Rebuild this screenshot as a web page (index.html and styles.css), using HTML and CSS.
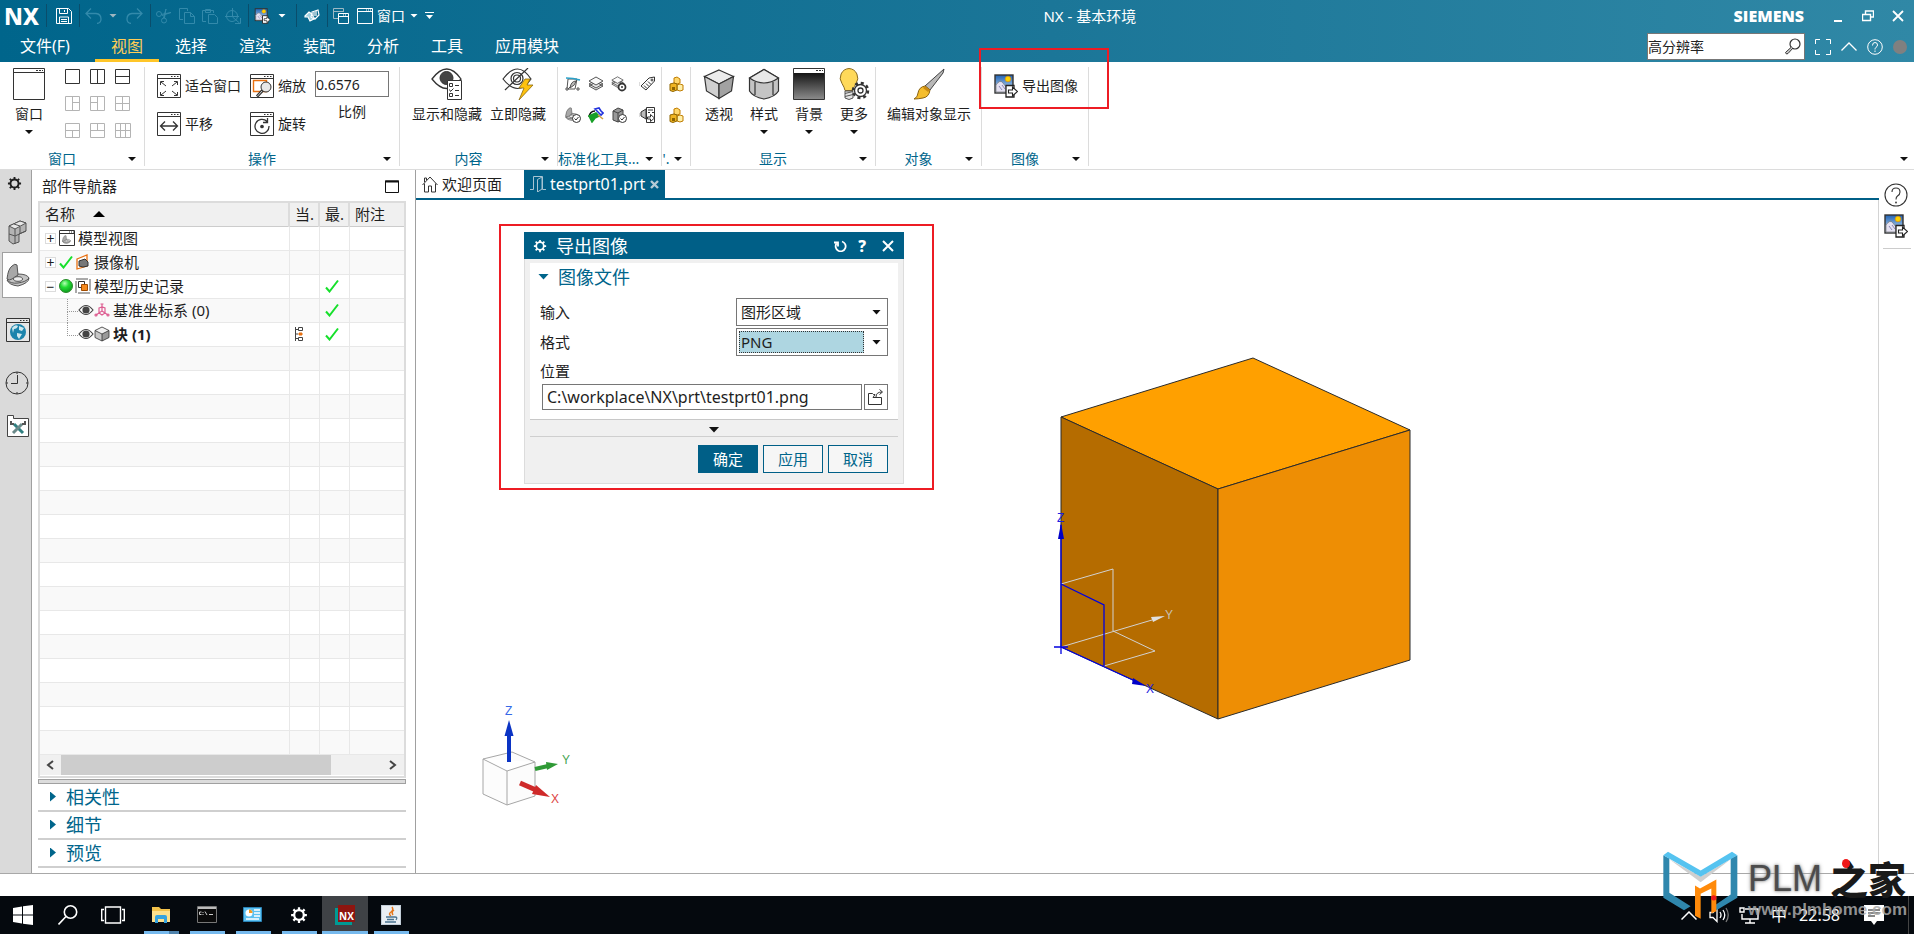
FILE: index.html
```
<!DOCTYPE html>
<html lang="zh-CN">
<head>
    <meta charset="UTF-8">
    <meta name="viewport" content="width=device-width, initial-scale=1.0">
    <title>NX - 基本环境</title>
    <link rel="stylesheet" href="styles.css">
</head>
<body>
    <!-- shared icons -->
    <svg class="defs" width="0" height="0">
        <defs>
            <linearGradient id="sky" x1="0" y1="0" x2="0" y2="1"><stop offset="0" stop-color="#1f62b4"/><stop offset="1" stop-color="#d8ecfa"/></linearGradient>
            <linearGradient id="dark" x1="0" y1="0" x2="0" y2="1"><stop offset="0" stop-color="#151515"/><stop offset="1" stop-color="#8a8a8a"/></linearGradient>
            <radialGradient id="ball" cx="0.4" cy="0.3" r="0.8"><stop offset="0" stop-color="#b6ffb6"/><stop offset="0.4" stop-color="#22dd33"/><stop offset="1" stop-color="#0a8a1a"/></radialGradient>
            <symbol id="i-export" viewBox="0 0 24 24">
                <rect x="1" y="1" width="18" height="18" fill="url(#sky)" stroke="#333" stroke-width="1.4"/>
                <circle cx="14" cy="5" r="2.8" fill="#ffd400" stroke="#e08a00" stroke-width="0.6"/>
                <path d="M2 11 Q6 5 9 9 L12 13 L12 18 L2 18 Z" fill="#e4e1f2" stroke="#777" stroke-width="0.7"/>
                <path d="M5 12l3 4M8 11l3 4" stroke="#8a86b4"/>
                <path d="M12 11.500h8v11.500h-8z" fill="#fff" stroke="#222" stroke-width="1.3"/>
                <path d="M14.500 16h4v-3l5 4.500l-5 4.500v-3h-4z" fill="#fff" stroke="#222" stroke-width="1.1"/>
            </symbol>
            <symbol id="i-check" viewBox="0 0 14 14"><path d="M1 8.500L4.500 12.500L13 1.500" fill="none" stroke="#16e02b" stroke-width="2"/></symbol>
            <symbol id="i-eye" viewBox="0 0 16 12"><path d="M1 6Q8 -3 15 6Q8 15 1 6Z" fill="#fff" stroke="#444" stroke-width="1.2"/><circle cx="8" cy="6" r="3.600" fill="#444"/></symbol>
            <symbol id="i-cube" viewBox="0 0 16 16"><path d="M8 1L15 4.500V11.500L8 15L1 11.500V4.500Z" fill="#c8c8c8"/><path d="M8 1L15 4.500L8 8L1 4.500Z" fill="#f0f0f0"/><path d="M8 8L15 4.500V11.500L8 15Z" fill="#9a9a9a"/><path d="M8 1L15 4.500V11.500L8 15L1 11.500V4.500ZM1 4.500L8 8L15 4.500M8 8V15" fill="none" stroke="#333" stroke-width="0.8"/></symbol>
            <symbol id="i-gear" viewBox="0 0 16 16"><circle cx="8" cy="8" r="4.300" fill="none" stroke="currentColor" stroke-width="2"/><path d="M8 1v3M8 12v3M1 8h3M12 8h3M3 3l2 2M11 11l2 2M3 13l2-2M11 5l2-2" stroke="currentColor" stroke-width="2"/></symbol>
            <symbol id="i-help" viewBox="0 0 24 24"><circle cx="12" cy="12" r="11" fill="none" stroke="currentColor" stroke-width="1.1"/><path d="M8 9q0-4 4-4t4 4q0 2.500-2.500 4q-1.500 1-1.500 3.500" fill="none" stroke="currentColor" stroke-width="1.1"/><circle cx="12" cy="19.500" r="0.900" fill="currentColor"/></symbol>
            <symbol id="i-frame" viewBox="0 0 24 24"><path d="M0.500 0.500h23v23h-23zM0.500 4.500h23" fill="none" stroke="#333"/><path d="M14 2.500h1.500M17 2.500h1.500M20 2.500h1.500" stroke="#333"/></symbol>
            <symbol id="i-boxes" viewBox="0 0 16 16"><path d="M6 2l3-1l3 2v4l-3 1l-3-1z" fill="#ffd76a" stroke="#c07c00"/><path d="M9 9l3-1l3 1v5l-3 1l-3-1z" fill="#fff0a8" stroke="#c07c00"/><path d="M2 8l4-1l3 1v6l-4 1.500l-3-1z" fill="#f0b420" stroke="#8f6500"/><path d="M4 11h3v3h-3z" fill="#8f6500"/></symbol>
            <symbol id="i-layers" viewBox="0 0 16 16"><path d="M8 6L15 10L8 14L1 10ZM8 4L15 8L8 12L1 8Z" fill="#e6e6e6" stroke="#444" stroke-width="0.900"/><path d="M8 1L15 5L8 9L1 5Z" fill="#fafafa" stroke="#444" stroke-width="0.900"/></symbol>
            <symbol id="i-badge" viewBox="0 0 16 16"><circle cx="11.500" cy="11.500" r="4" fill="#fff" stroke="#333"/><path d="M9.500 11.500l1.500 1.500l2.500-3" fill="none" stroke="#333"/></symbol>
            <symbol id="i-part" viewBox="0 0 24 24"><path d="M1 17Q6 11 12 11Q21 11 23 15Q23 20 12 23Q3 22 1 17Z" fill="#c4c4c4" stroke="#555"/><path d="M1 16Q2 6 6 3Q9 0 11 2L12 12L6 16Q3 18 1 16Z" fill="#a8a8a8" stroke="#555"/><path d="M1 17Q5 21 12 20Q20 19 23 15" fill="none" stroke="#555"/><ellipse cx="12" cy="16" rx="4.500" ry="2.300" fill="#eee" stroke="#555"/></symbol>
        </defs>
    </svg>

    <header class="app-header">
        <div class="titlebar">
            <span class="brand">NX</span>
            <span class="sep"></span>
            <button class="qa" aria-label="保存"><svg width="16" height="16" fill="none" stroke="#fff"><path d="M0.500 0.500h12l3 3v12h-15zM3.500 0.500v5h8v-5M8.500 2v2M3.500 15v-6h9v6M5 11.500h6M5 13.500h6"/></svg></button>
            <span class="sep"></span>
            <button class="qa faded" aria-label="撤消"><svg width="17" height="16" fill="none" stroke="#3f93b3" stroke-width="1.300"><path d="M6 0.500L1 5.500L6 10.500M1 5.500H11Q16 6 16 11Q16 15 12 15.500"/></svg></button>
            <i class="caret light dim"></i>
            <button class="qa faded" aria-label="重做"><svg width="17" height="16" fill="none" stroke="#3f93b3" stroke-width="1.300"><path d="M11 0.500L16 5.500L11 10.500M16 5.500H6Q1 6 1 11Q1 15 5 15.500"/></svg></button>
            <span class="sep"></span>
            <button class="qa faded" aria-label="剪切"><svg width="16" height="16" fill="none" stroke="#3f93b3"><circle cx="3" cy="6" r="2.500"/><circle cx="8" cy="12.500" r="2.500"/><path d="M5 6.500L15 4.500L6 7.500M7.500 10L10 1L9 6L8.500 10"/></svg></button>
            <button class="qa faded" aria-label="复制"><svg width="16" height="16" fill="none" stroke="#3f93b3"><path d="M4 11.500H0.500V0.500H8.500V3M5.500 4.500H11.500L15.500 8.500V15.500H5.500ZM11.500 4.500V8.500H15.500"/></svg></button>
            <button class="qa faded" aria-label="粘贴"><svg width="16" height="16" fill="none" stroke="#3f93b3"><path d="M4 13.500H0.500V2.500H11.500V5M3.500 1.500H8.500V4.500H3.500ZM6.500 6.500H12.500L15.500 9.500V15.500H6.500Z"/></svg></button>
            <button class="qa faded" aria-label="移动"><svg width="16" height="16" fill="none" stroke="#3f93b3"><circle cx="7" cy="8" r="5.500"/><path d="M0 8.500H14M7.500 0V9L14.500 15M10 15.500H15.500V10"/></svg></button>
            <span class="sep"></span>
            <button class="qa" aria-label="导出图像"><svg width="17" height="16"><use href="#i-export"/></svg></button>
            <i class="caret light"></i>
            <span class="sep wide"></span>
            <button class="qa" aria-label="触控"><svg width="16" height="14" fill="none" stroke="#fff" stroke-width="1.200"><path d="M1 7L5 3L8 5L7 8L10 10L6 12L4 8L1 8Z" fill="#9fd0e0"/><path d="M8 3L14 1L15 6L11 10L8 6Z"/><path d="M10 3v4M12 2v5"/></svg></button>
            <span class="sep"></span>
            <button class="qa" aria-label="切换窗口"><svg width="17" height="16" fill="none" stroke="#fff"><path d="M5 10.500H0.500V0.500H10.500V4M0.500 3.500H10" stroke="#9cb9c4"/><path d="M5.500 5.500H15.500V15.500H5.500ZM5.500 8.500H15.500M10 7h1M12 7h1"/></svg></button>
            <button class="qa window-menu"><svg width="16" height="16" fill="none" stroke="#fff"><path d="M0.500 0.500h15v15h-15zM0.500 3.500h15M9 2h1M11 2h1M13 2h1"/></svg>窗口</button>
            <i class="caret light"></i>
            <button class="more" aria-label="自定义"><svg width="9" height="7"><path d="M0 0.500h9" stroke="#fff"/><path d="M1 3h7l-3.500 4z" fill="#fff"/></svg></button>
            <h1 class="app-title">NX - 基本环境</h1>
            <span class="siemens">SIEMENS</span>
            <button class="win-btn" aria-label="最小化"><svg width="12" height="12"><path d="M2 11h8" stroke="#fff" stroke-width="2"/></svg></button>
            <button class="win-btn" aria-label="还原"><svg width="12" height="12" fill="none" stroke="#fff"><path d="M0.500 4.500h8v6h-8zM3.500 4V1h8v6h-3" stroke-width="1.400"/></svg></button>
            <button class="win-btn" aria-label="关闭"><svg width="12" height="12"><path d="M1 1l10 10M11 1L1 11" stroke="#fff" stroke-width="1.800"/></svg></button>
        </div>
        <nav class="menubar">
            <a href="#" class="menu file">文件(F)</a>
            <a href="#" class="menu active">视图</a>
            <a href="#" class="menu">选择</a>
            <a href="#" class="menu">渲染</a>
            <a href="#" class="menu">装配</a>
            <a href="#" class="menu">分析</a>
            <a href="#" class="menu">工具</a>
            <a href="#" class="menu">应用模块</a>
            <div class="search">
                <input type="text" value="高分辨率" aria-label="命令查找器">
                <svg width="17" height="17" fill="none" stroke="#333"><circle cx="11" cy="6" r="5" stroke-width="1.200"/><path d="M7.500 9L1.500 14.500L2.500 16L4 15.500L9 10" fill="#ccc"/></svg>
            </div>
            <div class="menu-tools">
                <button aria-label="全屏"><svg width="16" height="16" fill="none" stroke="#fff"><path d="M0.500 5V0.500H5M11 0.500H15.500V5M15.500 11V15.500H11M5 15.500H0.500V11"/></svg></button>
                <button aria-label="收起"><svg width="16" height="9" fill="none" stroke="#fff" stroke-width="1.300"><path d="M0.500 8.500L8 1L15.500 8.500"/></svg></button>
                <button aria-label="帮助"><svg width="16" height="16" fill="none" stroke="#fff"><circle cx="8" cy="8" r="7.300"/><path d="M5.500 6.500q0-3 2.500-3t2.500 2.500q0 1.500-1.500 2.300q-1 0.700-1 2.200M8 11.500v1.500"/></svg></button>
                <span class="dot"></span>
            </div>
        </nav>
    </header>

    <section class="ribbon">
        <div class="group g-window">
            <div class="group-body">
                <button class="big">
                    <svg width="32" height="32" fill="none" stroke="#333"><path d="M0.500 0.500h31v31h-31zM0.500 4.500h31M23 2.500h2M26 2.500h2M29 2.500h1"/></svg>
                    <span>窗口</span><i class="caret"></i>
                </button>
                <div class="layouts">
                    <svg width="15" height="15"><path d="M0.500 0.500h14v14h-14z"/></svg>
                    <svg width="15" height="15"><path d="M0.500 0.500h14v14h-14zM7.500 1v13"/></svg>
                    <svg width="15" height="15"><path d="M0.500 0.500h14v14h-14zM1 7.500h13"/></svg>
                    <svg class="off" width="15" height="15"><path d="M0.500 0.500h14v14h-14zM7.500 1v13M8 6.500h6"/></svg>
                    <svg class="off" width="15" height="15"><path d="M0.500 0.500h14v14h-14zM7.500 1v13M1 6.500h6"/></svg>
                    <svg class="off" width="15" height="15"><path d="M0.500 0.500h14v14h-14zM7.500 1v13M1 7.500h13"/></svg>
                    <svg class="off" width="15" height="15"><path d="M0.500 0.500h14v14h-14zM1 7.500h13M7.500 8v6"/></svg>
                    <svg class="off" width="15" height="15"><path d="M0.500 0.500h14v14h-14zM1 7.500h13M7.500 1v6"/></svg>
                    <svg class="off" width="16" height="15"><path d="M0.500 0.500h15v14h-15zM1 7.500h14M5.500 1v13M10.500 1v13"/></svg>
                </div>
            </div>
            <div class="group-foot"><span>窗口</span><i class="caret"></i></div>
        </div>
        <div class="group g-ops">
            <div class="group-body">
                <div class="op-grid">
                    <button class="small"><svg width="24" height="24" fill="none" stroke="#333"><use href="#i-frame"/><path d="M3.500 11V7.500H7M4 8l5 4M20.500 11V7.500H17M20 8l-5 4M3.500 18V21.500H7M4 21l5-4M20.500 18V21.500H17M20 21l-5-4"/></svg>适合窗口</button>
                    <button class="small"><svg width="24" height="24" fill="none" stroke="#333"><use href="#i-frame"/><path d="M3.500 6.500h13v11h-13z" stroke="#e87010" stroke-width="1.400"/><circle cx="16" cy="13" r="5" fill="#e8e8e8"/><path d="M12.500 16.500L7 22.500" stroke-width="3"/><path d="M12 17L7.500 22" stroke="#ccc"/></svg>缩放</button>
                    <button class="small"><svg width="24" height="24" fill="none" stroke="#333" stroke-width="1.300"><use href="#i-frame" stroke-width="1"/><path d="M3.500 14h17M8 9.500L3.500 14L8 18.500M16 9.500L20.500 14L16 18.500"/></svg>平移</button>
                    <button class="small"><svg width="24" height="24" fill="none" stroke="#333" stroke-width="1.300"><use href="#i-frame" stroke-width="1"/><path d="M17 9.500A7 7 0 1 0 19 14M17.500 6V10.500H13"/><circle cx="12" cy="14.500" r="1.200" fill="#333"/></svg>旋转</button>
                </div>
                <div class="scale">
                    <input id="scale" type="text" value="0.6576">
                    <label for="scale">比例</label>
                </div>
            </div>
            <div class="group-foot"><span>操作</span><i class="caret"></i></div>
        </div>
        <div class="group g-content">
            <div class="group-body">
                <button class="big">
                    <svg width="32" height="32" fill="none" stroke="#333"><path d="M1 11Q16 -9 30 11Q16 30 1 11Z" fill="#fff" stroke-width="1.300"/><circle cx="15.500" cy="10" r="6.500" fill="#444"/><path d="M16.500 12.500h14v19h-14z" fill="#fff"/><path d="M18.500 15.500h3v3h-3zM18.500 25.500h3v3h-3zM18.500 21.500l1 2l3-3M24 17.500h4M24 22.500h4M24 27.500h4"/></svg>
                    <span>显示和隐藏</span>
                </button>
                <button class="big">
                    <svg width="32" height="32" fill="none" stroke="#333" stroke-width="1.200"><path d="M1 11Q16 -9 29 11Q16 30 1 11Z"/><circle cx="15" cy="10.500" r="6"/><circle cx="15" cy="10.500" r="3.500"/><path d="M3 22L26 0"/><path d="M23 11h5l-3 6h6l-14 15l5-12h-5z" fill="#ffc20e" stroke="#8a6a10" stroke-width="0.800"/></svg>
                    <span>立即隐藏</span>
                </button>
            </div>
            <div class="group-foot"><span>内容</span><i class="caret"></i></div>
        </div>
        <div class="group g-std">
            <div class="group-body">
                <div class="tools">
                    <svg width="16" height="16" fill="none" stroke="#555"><path d="M3 3h9l-2 10h-8zM2 14L12 4"/><path d="M1 2Q8 2 15 4" stroke="#2aa0c8" stroke-width="1.500"/><path d="M1 12h2v2h-2zM12 12h2v2h-2z" fill="#fff"/><path d="M5 12q1-7 6-7q0 4-6 7" fill="#bbb"/></svg>
                    <svg width="16" height="16"><use href="#i-layers"/></svg>
                    <svg width="16" height="16"><svg width="13" height="13"><use href="#i-layers"/></svg><circle cx="11" cy="11" r="3.500" fill="#fff" stroke="#333" stroke-width="1.800"/><circle cx="11" cy="11" r="1" fill="#333"/></svg>
                    <svg width="16" height="16"><svg width="14" height="14"><use href="#i-part"/></svg><use href="#i-badge"/></svg>
                    <svg width="16" height="16" fill="none" stroke-width="1.600"><path d="M7 2l4-1l2 3l2 2l-2 2l-3-3z" fill="#fff" stroke="#2233dd"/><path d="M1 10q1-6 6-6" stroke="#111"/><path d="M1 9l3 6l3-4l4-2l-3-3z" stroke="#18a028" fill="#18a028"/><path d="M10 8l5 4" stroke="#d0a040"/></svg>
                    <svg width="16" height="16"><path d="M2 4l5-3l5 2v10l-5 2l-5-2z" fill="#999" stroke="#444"/><path d="M2 4l5 2l5-3M7 6v9" stroke="#444" fill="none"/><use href="#i-badge"/></svg>
                </div>
                <div class="tools split">
                    <svg width="16" height="16" fill="none" stroke="#333"><path d="M1 10L9 2L14.500 1L14.500 5L6 14Z"/><circle cx="12" cy="4" r="1"/><path d="M4 9.500l3 3M6 7.500l3 3M8 5.500l3 3"/></svg>
                    <svg width="16" height="16" fill="none" stroke="#333"><path d="M1 5l5-3v10l-5-3z" fill="#bbb"/><path d="M6.500 0.500h8v15h-8z" fill="#fff"/><path d="M8 3h5M8 5.500h2M12 5.500h2M7.500 10h3v-2.500l4 3.500l-4 3.500v-2.500h-3z"/></svg>
                </div>
            </div>
            <div class="group-foot"><span>标准化工具...</span><i class="caret"></i></div>
        </div>
        <div class="group g-mini">
            <div class="group-body">
                <div class="tools one">
                    <svg width="16" height="16"><use href="#i-boxes"/></svg>
                    <svg width="16" height="16"><use href="#i-boxes"/></svg>
                </div>
            </div>
            <div class="group-foot"><span>'.</span><i class="caret"></i></div>
        </div>
        <div class="group g-display">
            <div class="group-body">
                <button class="big"><svg width="32" height="32" viewBox="0 0 32 32" stroke="#333" stroke-width="1.200"><path d="M16 2L30.500 8.500L16 16L1.500 8.500Z" fill="#ececec"/><path d="M1.500 8.500L16 16V30.500L3.500 23Z" fill="#d0d0d0"/><path d="M30.500 8.500L16 16V30.500L28.500 23Z" fill="#a2a2a2"/></svg><span>透视</span></button>
                <button class="big"><svg width="32" height="32" viewBox="0 0 32 32" stroke="#333" stroke-width="1.200"><path d="M1.500 10L16 1.500L30.500 10V23Q27 29 16 31Q5 29 1.500 23Z" fill="#c4c4c4"/><path d="M1.500 10L16 1.500L30.500 10Q16 20 1.500 10Z" fill="#e8e8e8"/><path d="M7 14v13M25 14v13" fill="none"/></svg><span>样式</span><i class="caret"></i></button>
                <button class="big"><svg width="32" height="32"><path d="M0.500 0.500h31v31h-31z" fill="#fff" stroke="#333"/><path d="M1 5h30v26h-30z" fill="url(#dark)"/><path d="M23 2.500h2M26 2.500h2M29 2.500h1" stroke="#333"/></svg><span>背景</span><i class="caret"></i></button>
                <button class="big"><svg width="32" height="32"><path d="M11 0.500a9.500 9.500 0 0 1 7 15q-2.500 4-3 7h-8q-0.500-3-3-7a9.500 9.500 0 0 1 7-15z" fill="#ffd95a" stroke="#8a6a20"/><path d="M7 23h8v7q-4 3-8 0zM7 25.500l8-2M7 28.500l8-2" fill="#e4e4e4" stroke="#555"/><circle cx="22.500" cy="22.500" r="7" fill="#fff"/><circle cx="22.500" cy="22.500" r="7.500" fill="none" stroke="#333" stroke-width="2.500" stroke-dasharray="3 2.900"/><circle cx="22.500" cy="22.500" r="6" fill="#fff" stroke="#333" stroke-width="1.300"/><circle cx="22.500" cy="22.500" r="2.500" fill="#fff" stroke="#333" stroke-width="1.300"/></svg><span>更多</span><i class="caret"></i></button>
            </div>
            <div class="group-foot"><span>显示</span><i class="caret"></i></div>
        </div>
        <div class="group g-object">
            <div class="group-body">
                <button class="big"><svg width="32" height="32"><path d="M31 1L30 5L17 22L12 18Z" fill="#b8b8b8" stroke="#444"/><path d="M12 18l5 4q-1 7-7 8q-5 1-9 1q4-2 4-6q1-6 7-7z" fill="#f5bd2c" stroke="#8a6210"/><path d="M12 18l5 4l-2 2l-5-4z" fill="#c98a12"/></svg><span>编辑对象显示</span></button>
            </div>
            <div class="group-foot"><span>对象</span><i class="caret"></i></div>
        </div>
        <div class="group g-image">
            <div class="group-body">
                <button class="small"><svg width="24" height="24"><use href="#i-export"/></svg>导出图像</button>
                <div class="callout callout-ribbon"></div>
            </div>
            <div class="group-foot"><span>图像</span><i class="caret"></i></div>
        </div>
        <button class="ribbon-more" aria-label="功能区选项"><i class="caret"></i></button>
    </section>

    <main class="workspace">
        <nav class="resource-bar">
            <button aria-label="设置"><svg width="15" height="15"><use href="#i-gear"/></svg></button>
            <button aria-label="装配导航器"><svg width="20" height="25" stroke="#555"><path d="M1 6L12 1L18 3V11L11 14V22L5 24L1 21Z" fill="#b4b4b4"/><path d="M1 6L12 1L18 3L7 9Z" fill="#e6e6e6"/><path d="M7 9V24M1 14L7 16L18 11M12 7V14M6 4L12 6" fill="none"/></svg></button>
            <button class="current" aria-label="部件导航器"><svg width="24" height="24"><use href="#i-part"/></svg></button>
            <button aria-label="网页浏览器"><svg width="24" height="24"><path d="M0 0h24v24H0z" fill="#e6e6e6"/><use href="#i-frame"/><circle cx="12" cy="14" r="8" fill="#1c84ac"/><path d="M6 10q3-4 6-2q-1 3-4 3l-1 4zM13 8l5 2l-2 3l-3-1zM11 15l5 1l-3 5l-2-3z" fill="#cfe8ee"/></svg></button>
            <button aria-label="历史记录"><svg width="24" height="24" fill="none" stroke="#333"><circle cx="12" cy="12" r="11"/><path d="M12.500 4V12.500H6M12 1v2M12 21v2M1 12h2M21 12h2"/></svg></button>
            <button aria-label="Process Studio"><svg width="22" height="22" fill="none"><path d="M0.500 21.500V0.500h6v3h15v18z" fill="#fff" stroke="#444"/><path d="M7 9L16 18" stroke="#2f7f80" stroke-width="3"/><path d="M15 9L6 18" stroke="#6b8a8a" stroke-width="3"/><path d="M4 6v3h3M18 6v3h-3" stroke="#555" stroke-width="2"/></svg></button>
        </nav>

        <aside class="navigator">
            <div class="nav-title"><h2>部件导航器</h2><button aria-label="最大化"><svg width="14" height="13"><path d="M0.500 1h13v11.500h-13z" fill="none" stroke="#111"/><path d="M0 1.500h14" stroke="#111" stroke-width="2"/></svg></button></div>
            <div class="tree-box">
                <table class="tree">
                    <colgroup><col><col class="c-mini"><col class="c-mini"><col class="c-note"></colgroup>
                    <thead>
                        <tr><th>名称 <svg class="sort" width="12" height="6"><path d="M0 6L6 0L12 6Z"/></svg></th><th>当.</th><th>最.</th><th>附注</th></tr>
                    </thead>
                    <tbody>
                        <tr><td><div class="node"><button class="twist">+</button><svg width="16" height="16"><path d="M0.500 0.500h15v15h-15zM0.500 3.500h15" fill="#fff" stroke="#333"/><path d="M10 2h1M12 2h1M14 2h1" stroke="#333"/><svg x="3" y="5" width="9" height="9"><use href="#i-part"/></svg></svg>模型视图</div></td><td></td><td></td><td></td></tr>
                        <tr><td><div class="node"><button class="twist">+</button><svg width="14" height="14"><use href="#i-check"/></svg><svg width="16" height="16"><path d="M2 5L12 1V12L2 15Z" fill="#fff" stroke="#e87010" stroke-width="1.300"/><path d="M4 7l6-2l3 3v4l-5 1l-4-1z" fill="#777" stroke="#333"/></svg>摄像机</div></td><td></td><td></td><td></td></tr>
                        <tr><td><div class="node"><button class="twist">−</button><svg width="14" height="14"><circle cx="7" cy="7" r="6.500" fill="url(#ball)" stroke="#2a8a2a"/></svg><svg width="16" height="16"><path d="M1 1h14v14H1z" fill="#fff" stroke="#555" stroke-dasharray="12 2"/><path d="M3.500 3.500h6v6h-6z" fill="#fff" stroke="#333"/><path d="M6.500 6.500h6v6h-6z" fill="#f58a1f" stroke="#a34c00"/></svg>模型历史记录</div></td><td></td><td><svg width="14" height="14"><use href="#i-check"/></svg></td><td></td></tr>
                        <tr><td><div class="node child"><svg width="16" height="12"><use href="#i-eye"/></svg><svg width="16" height="16" fill="none" stroke="#dd5c90" stroke-width="1.200"><path d="M8 2V9L2 13M8 9L14 13M6.500 2h3M5 6l3-1l3 1v5l-3 2l-3-2z"/><circle cx="2" cy="13" r="1"/><circle cx="14" cy="13" r="1"/></svg>基准坐标系 (0)</div></td><td></td><td><svg width="14" height="14"><use href="#i-check"/></svg></td><td></td></tr>
                        <tr><td><div class="node child last"><svg width="16" height="12"><use href="#i-eye"/></svg><svg width="16" height="16"><use href="#i-cube"/></svg><b>块 (1)</b></div></td><td><svg width="9" height="14" fill="none" stroke="#444"><path d="M0.500 0v14M1 2.500h2M1 7h2M1 11.500h2M3.500 0.500h4v3h-4zM3.500 10.500h4v3h-4z"/><path d="M4 6h3v2h-3z" fill="#e87010" stroke="#e87010"/></svg></td><td><svg width="14" height="14"><use href="#i-check"/></svg></td><td></td></tr>
                        <tr><td></td><td></td><td></td><td></td></tr>
                        <tr><td></td><td></td><td></td><td></td></tr>
                        <tr><td></td><td></td><td></td><td></td></tr>
                        <tr><td></td><td></td><td></td><td></td></tr>
                        <tr><td></td><td></td><td></td><td></td></tr>
                        <tr><td></td><td></td><td></td><td></td></tr>
                        <tr><td></td><td></td><td></td><td></td></tr>
                        <tr><td></td><td></td><td></td><td></td></tr>
                        <tr><td></td><td></td><td></td><td></td></tr>
                        <tr><td></td><td></td><td></td><td></td></tr>
                        <tr><td></td><td></td><td></td><td></td></tr>
                        <tr><td></td><td></td><td></td><td></td></tr>
                        <tr><td></td><td></td><td></td><td></td></tr>
                        <tr><td></td><td></td><td></td><td></td></tr>
                        <tr><td></td><td></td><td></td><td></td></tr>
                        <tr><td></td><td></td><td></td><td></td></tr>
                        <tr><td></td><td></td><td></td><td></td></tr>
                    </tbody>
                </table>
                <div class="hscroll">
                    <button aria-label="向左"><svg width="8" height="10"><path d="M7 1L2 5L7 9" fill="none" stroke="#444" stroke-width="2"/></svg></button>
                    <div class="track"><div class="thumb"></div></div>
                    <button aria-label="向右"><svg width="8" height="10"><path d="M1 1L6 5L1 9" fill="none" stroke="#444" stroke-width="2"/></svg></button>
                </div>
            </div>
            <div class="splitter"></div>
            <button class="fold">相关性</button>
            <button class="fold">细节</button>
            <button class="fold">预览</button>
        </aside>

        <section class="stage">
            <div class="doc-tabs">
                <a href="#" class="doc"><svg width="16" height="17" fill="none" stroke="#333"><path d="M0.500 9L8 1L15.500 9M2.500 7.500V16H6.500V10H9.500V16H13.500V7.500M2.500 6V2h2v2"/></svg>欢迎页面</a>
                <a href="#" class="doc active"><svg width="16" height="16" fill="none" stroke="#a8c4d2"><path d="M0 13.500H3.500V0.500H12.500V13.500H16M7.500 3.500L12 1V13L7.500 16Z"/></svg>testprt01.prt<svg class="close" width="9" height="9"><path d="M1 1l7 7M8 1L1 8" stroke="#b5cbd6" stroke-width="2.400"/></svg></a>
            </div>
            <div class="viewport">
                <svg class="model" width="380" height="380" fill="none">
                    <g stroke="#2b2b2b">
                        <path d="M21 67L213 8L370 80L178 139Z" fill="#ffa000"/>
                        <path d="M21 67L178 139V369L21 297Z" fill="#b56c00"/>
                        <path d="M178 139L370 80V310L178 369Z" fill="#ee8e04"/>
                    </g>
                    <path d="M21 234L73 219V281M21 297L112 270M73 281L115 301L64 316" stroke="#d2d2d2"/>
                    <path d="M111 267L125 266L113 272Z" fill="#e0e0e0"/>
                    <path d="M21 175V304M14 297H28M21 297L95 331M21 234L64 255V316" stroke="#0000e0" stroke-width="1.300"/>
                    <path d="M21 173L24 189H18ZM93 328L106 336L92 334Z" fill="#0000c8"/>
                    <g class="axis" fill="#2020e0"><text x="17" y="172">Z</text><text x="106" y="343">X</text><text x="125" y="269" fill="#c8c0b4">Y</text></g>
                </svg>
                <svg class="triad" width="110" height="110" fill="none">
                    <path d="M13 59L42 52L65 62V96L37 105L13 94ZM13 59L37 71L65 62M37 71V105" fill="#fcfcfc" stroke="#a6a6a6"/>
                    <path d="M39 62V34" stroke="#0b34c4" stroke-width="4"/><path d="M39 20L43.500 36H34.500Z" fill="#0b34c4"/>
                    <path d="M65 69L78 66" stroke="#2f9a36" stroke-width="4"/><path d="M76 62L88 64L77 70Z" fill="#2f9a36"/>
                    <path d="M50 83L66 90" stroke="#cf2a2a" stroke-width="5"/><path d="M66 85L80 97L62 94Z" fill="#cf2a2a"/>
                    <g class="axis"><text x="35" y="15" fill="#3568e8">Z</text><text x="92" y="64" fill="#46a552">Y</text><text x="81" y="103" fill="#dd4444">X</text></g>
                </svg>

                <form class="dialog">
                    <div class="dlg-head">
                        <svg width="14" height="14"><use href="#i-gear"/></svg>
                        <h2>导出图像</h2>
                        <button type="button" aria-label="重置"><svg width="13" height="12" fill="none" stroke="#fff" stroke-width="1.800"><path d="M8 1.500A5 5 0 1 1 2.500 3.500M0 2.500h4v4"/></svg></button>
                        <button type="button" class="q">?</button>
                        <button type="button" aria-label="关闭"><svg width="12" height="12"><path d="M1 1l10 10M11 1L1 11" stroke="#fff" stroke-width="2"/></svg></button>
                    </div>
                    <div class="dlg-panel">
                        <h3>图像文件</h3>
                        <div class="field"><label for="src">输入</label><span class="select"><select id="src"><option>图形区域</option></select></span></div>
                        <div class="field"><label for="fmt">格式</label><span class="select focused"><select id="fmt"><option>PNG</option></select></span></div>
                        <label class="loc" for="path">位置</label>
                        <div class="path-row">
                            <input id="path" type="text" value="C:\workplace\NX\prt\testprt01.png">
                            <button type="button" aria-label="浏览"><svg width="16" height="16" fill="none" stroke="#333"><path d="M0.500 4.500V15.500H13.500V8.500H5L7 5.500H5.500L4.500 4.500ZM8 8Q8 3 14 3M11.500 0.500L14.500 3L11.500 5.500"/></svg></button>
                        </div>
                    </div>
                    <button type="button" class="expand" aria-label="更多选项"></button>
                    <div class="dlg-foot">
                        <button type="button" class="ok">确定</button>
                        <button type="button">应用</button>
                        <button type="button">取消</button>
                    </div>
                </form>
                <div class="callout callout-dialog"></div>
            </div>
        </section>

        <nav class="right-bar">
            <button aria-label="帮助"><svg width="24" height="24"><use href="#i-help"/></svg></button>
            <button aria-label="导出图像"><svg width="24" height="24"><use href="#i-export"/></svg></button>
        </nav>
    </main>
    <div class="status"></div>

    <footer class="taskbar">
        <button class="sys" aria-label="开始"><svg width="20" height="20" fill="#fff"><path d="M0 3L9 1.500V9.500H0ZM10 1.300L20 0V9.500H10ZM0 10.500H9V18.500L0 17ZM10 10.500H20V20L10 18.700Z"/></svg></button>
        <button class="sys" aria-label="搜索"><svg width="20" height="20" fill="none" stroke="#fff" stroke-width="1.600"><circle cx="12.500" cy="7" r="6.200"/><path d="M8 11.500L0.500 19.500"/></svg></button>
        <button class="sys" aria-label="任务视图"><svg width="24" height="18" fill="none" stroke="#fff" stroke-width="1.400"><path d="M4.500 1h15v16h-15zM3 3.500H0.700v11H3M21 3.500h2.300v11H21"/></svg></button>
        <button class="app stacked" aria-label="文件资源管理器"><svg width="20" height="18"><path d="M1 1h7l2 2h9v13H1z" fill="#f3c24a"/><path d="M1 5h18v11H1z" fill="#fde08c"/><path d="M4 17v-6q0-2 2-2h8q2 0 2 2v6h-3v-4h-6v4z" fill="#36a3de"/></svg></button>
        <button class="app" aria-label="命令提示符"><svg width="20" height="18"><path d="M0.500 0.500h19v16h-19z" fill="#0a0a0a" stroke="#777"/><path d="M1 1h18v2H1z" fill="#bbb"/><path d="M2.500 6h2M2.500 6v2.500h2M6 6v1M6 8v1M8 5.500l2 3.500M12 8.500h4" fill="none" stroke="#ccc"/></svg></button>
        <button class="app" aria-label="控制面板"><svg width="20" height="16"><path d="M0.500 0.500h18v14h-18z" fill="#5cc0f0" stroke="#2b84b8"/><circle cx="6" cy="6" r="3.500" fill="#fff"/><path d="M6 6V2.500A3.500 3.500 0 0 1 9.500 6Z" fill="#f59a20"/><path d="M11 3h6M11 6h6M11 9h6M3 12h13" stroke="#fff" stroke-width="1.500"/></svg></button>
        <button class="app" aria-label="设置"><svg width="18" height="18"><use href="#i-gear"/></svg></button>
        <button class="app current" aria-label="NX"><svg width="22" height="22"><path d="M1 4h17v17H1z" fill="#009a94"/><path d="M4 1h17v17H4z" fill="#8e1510"/><text x="5" y="16" class="nx-ico">NX</text></svg></button>
        <button class="app" aria-label="Java"><svg width="20" height="20"><path d="M0 0h20v20H0z" fill="#c3ced8"/><path d="M1 1h18v18H1z" fill="#e9eef3"/><path d="M11 2q2 3-1 5t0 4M13 5q-3 2-1 5" fill="none" stroke="#e6761a" stroke-width="1.500"/><path d="M5 12h9M6 14.500h7M4 17h11M14 12q3 0 1 3" fill="none" stroke="#4a7390" stroke-width="1.300"/></svg></button>
        <div class="tray">
            <svg width="16" height="9" fill="none" stroke="#fff" stroke-width="1.500"><path d="M0.500 8.500L8 1L15.500 8.500"/></svg>
            <svg width="20" height="16" fill="none" stroke="#fff" stroke-width="1.300"><path d="M1 5.500h3l4-4v13l-4-4h-3zM11 5q2 3 0 6M14 3q3.500 5 0 10"/><path d="M17 1q4.500 7 0 14" stroke="#777"/></svg>
            <svg width="20" height="17" fill="none" stroke="#fff" stroke-width="1.400"><path d="M6 2h13v10H3V7M11 12v4M6 16h10M1 1h4v4H1z"/></svg>
            <span class="ime">中</span>
            <time class="clock">22:58</time>
            <svg width="20" height="20"><path d="M0 0h20v16h-7l-3 4l-3-4H0z" fill="#fff"/><path d="M4 5h12M4 8h12M4 11h7" stroke="#111"/></svg>
        </div>
    </footer>

    <div class="watermark">
        <svg width="76" height="69" viewBox="0 0 228 206">
            <path d="M4 12L22 22V125L86 165L66 177L4 140ZM226 12L206 22V130L162 160V178L226 140Z" fill="#2f87ad"/>
            <path d="M22 24L116 76L206 24L116 93Z" fill="#cfcfcf"/>
            <path d="M4 12L18 2L116 58L210 2L226 12L116 77Z" fill="#55c3f0"/>
            <path d="M99 103L114 112L163 85V180L148 186V112L116 128V203L99 194Z" fill="#ff8a0a"/>
            <circle cx="155" cy="140" r="8" fill="#f01818"/>
        </svg>
        <div class="wm-text">
            <div class="wm-name"><span class="plm">PLM</span><span class="home">之家</span></div>
            <div class="wm-url">www.plmhome.com</div>
        </div>
    </div>
</body>
</html>
```
FILE: styles.css
```
* { box-sizing: border-box; }
body { margin: 0; height: 100vh; display: flex; flex-direction: column; overflow: hidden; position: relative; background: #fff; color: #1e1e1e; font-family: "Noto Sans", "Noto Sans CJK SC", sans-serif; font-size: 14px; font-weight: 400; line-height: 20px; }
button { font: inherit; color: inherit; background: none; border: none; padding: 0; display: flex; align-items: center; cursor: pointer; }
input, select { font: inherit; color: inherit; }
a { color: inherit; text-decoration: none; }
h1, h2, h3 { margin: 0; font-weight: 400; }
svg { display: block; flex: none; }
.defs { position: absolute; }
.caret { flex: none; width: 8px; height: 4px; background: #111; clip-path: polygon(0 0, 100% 0, 50% 100%); }
.caret.light { background: #fff; }
.caret.dim { background: #9fb6c0; }

/* header */
.app-header { flex: none; color: #fff; background: linear-gradient(to right, #00658b, #1b7698 55%, #3088a6); }
.titlebar { display: flex; align-items: center; height: 31px; padding: 0 10px 0 4px; }
.brand { width: 42px; font-family: "Noto Sans", sans-serif; font-size: 23px; font-weight: 800; }
.sep { width: 1px; height: 23px; margin: 0 5px 0 0; background: #0a4d6b; }
.brand + .sep { margin-right: 9px; }
.qa { margin-right: 7px; }
.titlebar .caret { margin-right: 9px; }
.faded { opacity: 0.8; }
.sep.wide { margin-left: 1px; margin-right: 7px; }
.window-menu { gap: 4px; margin-right: 5px; }
.titlebar .window-menu + .caret { margin-right: 7px; }
.app-title { flex: 1; padding-left: 12px; text-align: center; font-size: 15px; }
.siemens { font-family: "Open Sans", sans-serif; font-weight: 800; font-size: 16px; margin-right: 28px; }
.win-btn { margin-right: 18px; }
.win-btn:last-child { margin-right: 0; }
.menubar { display: flex; height: 31px; padding-right: 7px; }
.menu { min-width: 64px; padding: 0 16px; font-size: 16px; line-height: 30px; text-align: center; }
.menu.file { margin-right: 9px; padding-left: 20px; }
.menu.active { color: #ffcd57; border-bottom: 3px solid #ffc629; }
.search { display: flex; align-items: center; width: 158px; height: 27px; margin: 2px 10px 0 auto; padding-right: 3px; background: #fff; border: 1px solid #777; }
.search input { flex: 1; min-width: 0; padding: 0; border: none; background: none; color: #222; }
.menu-tools { display: flex; align-items: center; gap: 10px; }
.dot { width: 14px; height: 14px; border-radius: 50%; background: #808080; }

/* ribbon */
.ribbon { flex: none; display: flex; height: 108px; padding: 5px 0 3px; border-bottom: 1px solid #dcdcdc; background: #fff; }
.group { display: flex; flex-direction: column; border-right: 1px solid #dcdcdc; }
.group-body { flex: 1; display: flex; align-items: flex-start; padding-top: 1px; position: relative; }
.group-foot { display: flex; align-items: center; height: 14px; padding-right: 8px; color: #00658b; line-height: 14px; white-space: nowrap; }
.group-foot span { flex: 1; padding-right: 4px; text-align: center; }
.big { flex-direction: column; white-space: nowrap; }
.big span { margin: 4px 0 6px; }
.small { gap: 4px; white-space: nowrap; }
.g-window { width: 145px; }
.g-window .group-body { padding-left: 13px; gap: 20px; }
.layouts { display: grid; grid-template-columns: 15px 15px 15px; gap: 12px 10px; padding-top: 1px; }
.layouts svg { fill: none; stroke: #333; }
.layouts .off { stroke: #b4b4b4; }
.g-ops { width: 255px; }
.g-ops .group-body { padding-left: 12px; gap: 9px; }
.op-grid { display: grid; grid-template-columns: auto auto; gap: 14px 9px; padding-top: 6px; }
.scale { display: flex; flex-direction: column; align-items: center; gap: 5px; padding-top: 3px; }
.scale input { width: 74px; height: 26px; padding: 0; border: 1px solid #767676; }
.g-content { width: 158px; }
.g-content .group-body { padding-left: 12px; gap: 8px; }
.g-std { width: 104px; }
.g-std .group-foot span { padding-right: 6px; }
.g-std .group-body { padding-left: 7px; }
.tools { display: grid; grid-template-columns: 16px 16px 16px; gap: 15px 7px; padding-top: 8px; }
.tools.split { grid-template-columns: 16px; margin-left: 6px; padding-left: 7px; }
.tools.split svg { box-shadow: -7px 0 0 -6px #dcdcdc; }
.tools.one { grid-template-columns: 16px; }
.g-mini { width: 29px; }
.g-mini .group-body { padding-left: 6px; }
.g-display { width: 185px; }
.g-display .group-body { padding-left: 12px; gap: 13px; }
.g-object { width: 106px; }
.g-object .group-body { padding-left: 11px; }
.g-image { width: 107px; }
.g-image .group-body { padding-left: 12px; }
.g-image .small { padding-top: 6px; }
.ribbon-more { margin-left: auto; padding-right: 6px; align-items: flex-end; padding-bottom: 5px; }
.callout { position: absolute; border: 2px solid #ed1c24; pointer-events: none; z-index: 5; }
.callout-ribbon { left: -3px; top: -19px; width: 130px; height: 61px; }

/* workspace */
.workspace { flex: 1; min-height: 0; display: flex; border-bottom: 1px solid #a8a8a8; }
.resource-bar { width: 32px; display: flex; flex-direction: column; align-items: center; background: #dadada; border-right: 1px solid #a0a0a0; }
.resource-bar button { width: 31px; height: 54px; padding-left: 4px; justify-content: center; }
.resource-bar button:first-child { height: 27px; padding: 0 2px 0 0; }
.resource-bar button:nth-child(2) { padding-top: 16px; }
.resource-bar .current { width: 30px; height: 46px; margin: 1px -2px 0 0; padding-left: 1px; background: #fff; border: 1px solid #a0a0a0; border-right: none; }
.resource-bar button:nth-child(4) { height: 58px; padding-top: 5px; }
.resource-bar button:nth-child(5) { padding-left: 3px; }
.resource-bar button:nth-child(6) { height: 32px; }
.navigator { width: 384px; display: flex; flex-direction: column; padding: 0 9px 0 6px; border-right: 1px solid #a0a0a0; }
.nav-title { display: flex; justify-content: space-between; align-items: center; height: 31px; padding: 1px 7px 0 4px; }
.nav-title h2 { font-size: 15px; }
.tree-box { border: 2px solid #dcdcdc; padding: 0 0 1px; }
.tree { width: 100%; table-layout: fixed; border-collapse: collapse; font-size: 15px; }
.c-mini { width: 30px; }
.c-note { width: 55px; }
.tree th { height: 23px; padding: 0 0 0 5px; background: #f0f0f0; border-right: 2px solid #dcdcdc; border-bottom: 1px solid #ccc; text-align: left; font-weight: 400; white-space: nowrap; }
.tree td { height: 24px; padding: 0 0 0 5px; border-right: 1px solid #e8e8e8; border-bottom: 1px solid #e8e8e8; }
.tree th:last-child, .tree td:last-child { border-right: none; }
.tree tbody tr:nth-child(even) { background: #f9f9f9; }
.sort { display: inline-block; margin-left: 14px; vertical-align: 3px; }
.node { display: flex; align-items: center; gap: 2px; height: 23px; white-space: nowrap; line-height: 22px; }
.twist { width: 11px; height: 11px; margin-right: 1px; justify-content: center; border: 1px solid #dcdcdc; background: #fff; font-size: 14px; line-height: 9px; }
.node svg:last-of-type { margin-right: 1px; }
.child { margin-left: 22px; position: relative; padding-left: 11px; gap: 0; }
.child svg:last-of-type { margin-right: 3px; }
.child::before { content: ""; position: absolute; left: 0; top: 0; width: 10px; height: 12px; border-left: 1px dotted #999; border-bottom: 1px dotted #999; }
.child:not(.last)::after { content: ""; position: absolute; left: 0; top: 12px; height: 12px; border-left: 1px dotted #999; }
.hscroll { display: flex; height: 20px; padding: 0 7px 0 6px; background: #f0f0f0; }
.track { flex: 1; margin: 0 7px; }
.thumb { width: 84%; height: 20px; background: #cdcdcd; }
.splitter { height: 5px; margin: 1px 0 0; flex: none; background: #dcdcdc; border: 1px solid #a0a0a0; }
.fold { height: 28px; padding-left: 12px; gap: 10px; border-bottom: 2px solid #cfcfcf; color: #00658b; font-size: 18px; flex: none; }
.fold::before { content: ""; width: 6px; height: 10px; background: #00658b; clip-path: polygon(0 0, 100% 50%, 0 100%); }

/* graphics area */
.stage { flex: 1; min-width: 0; display: flex; flex-direction: column; }
.doc-tabs { display: flex; height: 30px; border-bottom: 2px solid #005f87; font-size: 15px; }
.doc { display: flex; align-items: center; gap: 4px; padding: 0 22px 0 6px; }
.doc.active { padding: 0 6px; background: #005f87; color: #fff; font-size: 16px; }
.close { margin-left: 1px; }
.viewport { flex: 1; position: relative; border-right: 1px solid #d4d4d4; overflow: hidden; }
.model { position: absolute; left: 624px; top: 150px; }
.triad { position: absolute; left: 54px; top: 500px; }
.axis { font-family: "Liberation Sans", sans-serif; font-size: 12px; }
.callout-dialog { left: 83px; top: 24px; width: 435px; height: 266px; }

/* export dialog */
.dialog { position: absolute; left: 108px; top: 32px; width: 380px; padding-bottom: 10px; background: #f0f0f0; border: 1px solid #dcdcdc; border-top: none; font-size: 15px; }
.dlg-head { display: flex; align-items: center; height: 27px; margin: 0 -1px; padding: 0 10px 0 9px; color: #fff; background: #005f87; }
.dlg-head h2 { flex: 1; margin-left: 9px; font-size: 18px; }
.dlg-head button { margin-left: 11px; }
.dlg-head button:last-child { margin-left: 16px; }
.dlg-head .q { font-weight: 800; font-size: 16px; }
.dlg-panel { margin: 4px 5px 0; padding: 0 10px 9px; background: #fff; border-bottom: 1px solid #c8c8c8; }
.dlg-panel h3 { display: flex; align-items: center; gap: 9px; height: 35px; padding-bottom: 8px; color: #00658b; font-size: 18px; }
.dlg-panel h3::before { content: ""; width: 11px; height: 6px; margin-left: -2px; background: #00658b; clip-path: polygon(0 0, 100% 0, 50% 100%); }
.field { display: flex; justify-content: space-between; align-items: center; margin-bottom: 2px; }
.select { display: flex; align-items: center; width: 152px; height: 28px; padding: 2px 6px 2px 2px; border: 1px solid #767676; }
.select::after { content: ""; width: 9px; height: 5px; background: #111; clip-path: polygon(0 0, 100% 0, 50% 100%); }
.select select { flex: 1; height: 22px; margin-right: 8px; padding: 0 2px; appearance: none; border: none; background: none; }
.select.focused select { background: #aed6e1; outline: 1px dotted #333; outline-offset: -1px; }
.loc { display: block; height: 26px; line-height: 26px; }
.path-row { display: flex; gap: 2px; height: 26px; margin-left: 2px; }
.path-row input { flex: 1; min-width: 0; padding: 0 4px; border: 1px solid #767676; font-size: 16px; }
.path-row button { width: 24px; justify-content: center; border: 1px solid #767676; }
.expand { width: 368px; height: 17px; margin: 0 5px; padding-top: 3px; justify-content: center; border-bottom: 1px solid #cfcfcf; }
.expand::before { content: ""; width: 11px; height: 6px; background: #111; clip-path: polygon(0 0, 100% 0, 50% 100%); }
.dlg-foot { display: flex; justify-content: flex-end; gap: 5px; margin: 8px 15px 0; }
.dlg-foot button { width: 60px; height: 28px; justify-content: center; border: 1px solid #005f87; background: #f6f6f6; color: #00658b; }
.dlg-foot .ok { background: #005f87; color: #fff; }

.right-bar { width: 35px; padding: 13px 3px 0 4px; color: #333; }
.right-bar button { width: 28px; height: 31px; align-items: flex-start; padding-left: 1px; }
.right-bar button:last-child { height: 35px; border-bottom: 1px solid #ccc; }
.status { flex: none; height: 22px; background: #fff; }

/* windows taskbar */
.taskbar { flex: none; display: flex; height: 38px; background: #05090e; color: #fff; padding-right: 5px; }
.sys { width: 45px; justify-content: center; }
.app { width: 46px; justify-content: center; position: relative; }
.sys + .app { margin-left: 3px; }
.app::after { content: ""; position: absolute; left: 6px; right: 5px; bottom: 0; height: 3px; background: #76b9ed; }
.app.stacked::after { background: linear-gradient(to right, #76b9ed 70%, #4f83ad 70%); }
.app.current { background: #3f4246; }
.app.current::after { left: 0; right: 0; }
.nx-ico { font: bold 10px "Open Sans", sans-serif; fill: #fff; }
.tray { display: flex; align-items: center; gap: 12px; margin-left: auto; padding-right: 24px; border-right: 1px solid #444; }
.tray > :nth-child(2) { margin-right: -2px; }
.ime { font-size: 16px; }
.clock { font-size: 16px; margin-right: 12px; }

.watermark { position: absolute; right: 8px; bottom: 14px; display: flex; z-index: 9; pointer-events: none; }
.wm-text { width: 158px; margin-left: 10px; padding-top: 7px; }
.wm-name { display: flex; justify-content: space-between; height: 42px; line-height: 42px; }
.plm { font-family: "Liberation Sans", sans-serif; font-size: 36px; color: #4c4c4c; text-shadow: 0 0 2px #888, 0 0 4px #999; }
.home { position: relative; font-size: 38px; font-weight: 900; color: #1a1a1a; }
.home::before { content: ""; position: absolute; left: 12px; top: 1px; width: 8px; height: 9px; border-radius: 50%; background: #f01818; }
.wm-url { font-family: "Liberation Sans", sans-serif; font-size: 17px; font-weight: bold; color: rgba(170, 170, 170, 0.85); }
```
